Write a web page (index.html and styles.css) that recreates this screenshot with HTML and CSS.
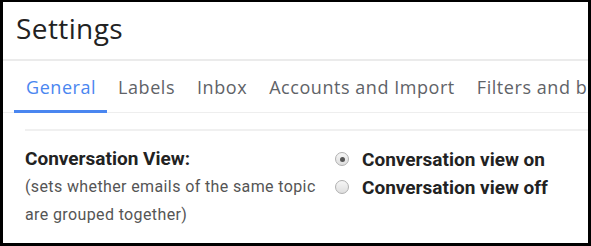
FILE: index.html
```html
<!DOCTYPE html>
<html lang="en">
  <head>
    <meta charset="UTF-8" />
    <meta name="viewport" content="width=device-width, initial-scale=1.0" />
    <title>Settings</title>

    <link rel="stylesheet" href="styles.css">
  </head>

  <body>
    <div class="frame">
      <div class="header">
        <h1 class="title">Settings</h1>
      </div>

      <div class="tabs">
        <div class="tab active">General</div>
        <div class="tab">Labels</div>
        <div class="tab">Inbox</div>
        <div class="tab">Accounts and Import</div>
        <div class="tab">Filters and blocked addresses</div>
      </div>

      <div class="row">
        <div class="row-label">
          <div class="row-title">Conversation View:</div>
          <div class="row-desc">(sets whether emails of the same topic are grouped together)</div>
        </div>
        <div class="options">
          <label class="option">
            <span class="radio checked"></span>
            Conversation view on
          </label>
          <label class="option">
            <span class="radio"></span>
            Conversation view off
          </label>
        </div>
      </div>
    </div>
  </body>
</html>
```

FILE: styles.css
```css
body {
  margin: 0;
  background: #fff;
}

.frame {
  width: 591px;
  height: 246px;
  box-sizing: border-box;
  border: 3px solid #000;
  border-top-width: 2px;
  overflow: hidden;
  font-family: Roboto, "Liberation Sans", sans-serif;
}

.header {
  height: 59px;
  box-sizing: border-box;
  display: flex;
  align-items: center;
  padding: 0 0 5px 13px;
  border-bottom: 2px solid #ebebeb;
}

.title {
  margin: 0;
  font-family: "Open Sans", sans-serif;
  font-weight: 400;
  font-size: 28px;
  color: #222;
  letter-spacing: 0.4px;
}

.tabs {
  display: flex;
  height: 51px;
  padding-left: 11px;
  border-bottom: 1px solid #eee;
  white-space: nowrap;
}

.tab {
  display: flex;
  align-items: center;
  padding: 0 11px;
  box-sizing: border-box;
  border-bottom: 3px solid transparent;
  margin-bottom: -1px;
  font-family: "Open Sans", sans-serif;
  font-size: 18px;
  letter-spacing: 0.55px;
  color: #5f6368;
  padding-top: 3px;
}

.tab.active {
  padding-left: 12px;
  color: #4a86f0;
  border-bottom-color: #4a86f0;
}

.row {
  display: flex;
  margin: 16px 0 0 22px;
  padding-top: 14px;
  border-top: 2px solid #f0f0f0;
}

.row-label {
  width: 310px;
}

.row-title {
  font-size: 19px;
  font-weight: 700;
  line-height: 28px;
  color: #222;
}

.row-desc {
  font-size: 16px;
  letter-spacing: 0.38px;
  line-height: 28px;
  color: #555;
  width: 306px;
}

.options {
  display: flex;
  flex-direction: column;
}

.option {
  display: flex;
  align-items: center;
  height: 28px;
  font-size: 19px;
  font-weight: 700;
  color: #222;
}

.radio {
  width: 14px;
  height: 14px;
  box-sizing: border-box;
  border: 1px solid #b0b0b0;
  border-radius: 50%;
  background: linear-gradient(#f6f6f6, #dedede);
  margin-right: 13px;
  position: relative;
}

.radio.checked::after {
  content: "";
  position: absolute;
  left: 3.5px;
  top: 3.5px;
  width: 5px;
  height: 5px;
  border-radius: 50%;
  background: #555;
}
```
